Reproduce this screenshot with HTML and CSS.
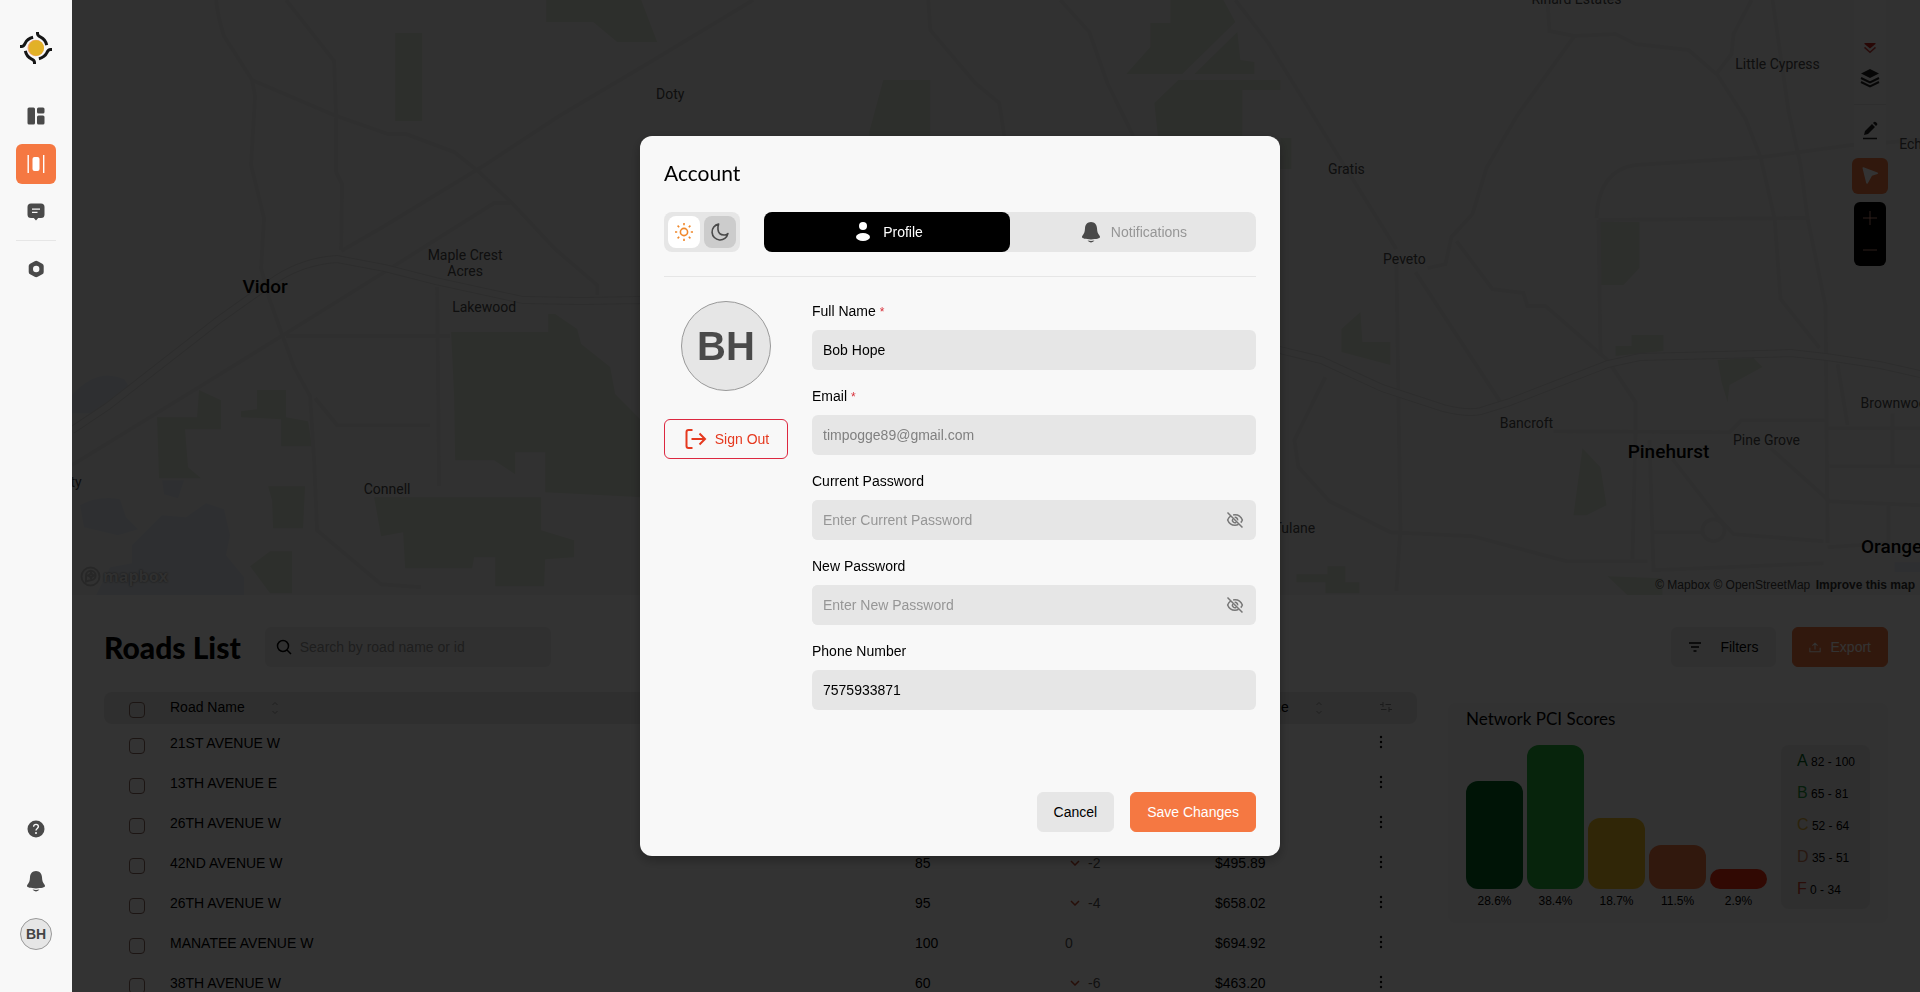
FILE: index.html
```html
<!DOCTYPE html>
<html lang="en">

<head>
  <meta charset="UTF-8" />
  <meta name="viewport" content="width=device-width, initial-scale=1.0" />
  <title>Roads - Account</title>
  <link rel="stylesheet" href="styles.css">
</head>

<body>
  <!-- Shared icons -->
  <svg class="sprite" aria-hidden="true">
    <symbol id="icon-bell" viewBox="0 0 24 24">
      <path d="M12 2c-3.700 0-5.800 2.800-6 6.200-.2 3.400-.7 5-1.900 6.500-.8 1-1.100 1.700-1.100 2.400 0 1.300 3.600 2.300 9 2.300s9-1 9-2.300c0-.7-.3-1.400-1.100-2.400-1.200-1.500-1.700-3.100-1.900-6.500C17.800 4.800 15.700 2 12 2z" />
      <path d="M8.500 20.600q3.500.6 7 0-1.200 1.800-3.500 1.800t-3.500-1.800z" />
    </symbol>
    <symbol id="icon-eye-off" viewBox="0 0 24 24">
      <g fill="none" stroke="currentColor" stroke-width="2">
        <path d="M6.500 6.500C4.500 7.800 3 9.800 2.200 12c1.600 4.200 5.400 7 9.800 7 1.700 0 3.300-.4 4.800-1.200M9.500 5.300C10.300 5.100 11.100 5 12 5c4.400 0 8.200 2.800 9.800 7-.5 1.300-1.200 2.500-2.100 3.500" />
        <path d="M9 10.500a3.500 3.500 0 0 0 4.800 4.700M11.500 8.500a3.500 3.500 0 0 1 4 4" />
        <path d="M2 2l20 20" />
      </g>
    </symbol>
    <symbol id="icon-sort" viewBox="0 0 8 14">
      <path d="M1.500 4L4 1.500 6.500 4M1.500 10L4 12.500 6.500 10" fill="none" stroke="currentColor" />
    </symbol>
    <symbol id="icon-down" viewBox="0 0 10 6">
      <path d="M1 1l4 4 4-4" fill="none" stroke="currentColor" stroke-width="1.500" />
    </symbol>
    <symbol id="icon-dots" viewBox="0 0 4 14">
      <circle cx="2" cy="2" r="1.200" />
      <circle cx="2" cy="7" r="1.200" />
      <circle cx="2" cy="12" r="1.200" />
    </symbol>
  </svg>

  <nav class="sidebar" aria-label="Main">
    <a class="logo" href="#" aria-label="Home">
      <svg width="32" height="32" viewBox="0 0 32 32">
        <circle cx="15.700" cy="16" r="8.200" fill="#f3a97b" />
        <circle cx="16.300" cy="16" r="7.700" fill="#e2b127" />
        <g fill="none" stroke="#161616" stroke-width="3">
          <path id="arc" d="M17.500 0v1.500c0 2 1.300 2.800 3.200 3.600 2.800 1.300 5 3.700 6 8" />
          <use href="#arc" transform="rotate(90 16 16)" />
          <use href="#arc" transform="rotate(180 16 16)" />
          <use href="#arc" transform="rotate(270 16 16)" />
        </g>
      </svg>
    </a>

    <div class="nav-group">
      <a class="nav-item" href="#" aria-label="Dashboard">
        <svg width="20" height="20" viewBox="0 0 20 20">
          <rect x="1.500" y="1.500" width="7.500" height="17" rx="1.500" />
          <rect x="11" y="1.500" width="7.500" height="6" rx="1.500" />
          <rect x="11" y="9.500" width="7.500" height="9" rx="1.500" />
        </svg>
      </a>
      <a class="nav-item active" href="#" aria-label="Roads">
        <svg width="20" height="20" viewBox="0 0 20 20">
          <rect x="1.500" y="1" width="1.400" height="18" />
          <rect x="17" y="1" width="1.400" height="18" />
          <rect x="6.500" y="3" width="7" height="14" rx="2" />
        </svg>
      </a>
      <a class="nav-item" href="#" aria-label="Messages">
        <svg width="20" height="20" viewBox="0 0 20 20">
          <path d="M5 1.500h10a3.500 3.500 0 0 1 3.500 3.500v7.500A3.500 3.500 0 0 1 15 16h-2.800L10 18.500 7.800 16H5a3.500 3.500 0 0 1-3.500-3.500V5A3.500 3.500 0 0 1 5 1.500z" />
          <path d="M6 7.200h8M6 10.400h5.500" stroke="#f8f8f8" stroke-width="1.300" />
        </svg>
      </a>
      <hr>
      <a class="nav-item" href="#" aria-label="Settings">
        <svg width="20" height="20" viewBox="0 0 20 20">
          <path fill-rule="evenodd" d="M8.700 2.200q1.500-.8 3 0l4.600 2.500q1.400.8 1.400 2.400v5.800q0 1.600-1.400 2.400l-4.600 2.500q-1.500.8-3 0l-4.600-2.500q-1.400-.8-1.400-2.400V7.100q0-1.600 1.400-2.400zM10.200 6.800a3.200 3.200 0 1 0 0 6.400 3.200 3.200 0 0 0 0-6.400z" />
        </svg>
      </a>
    </div>

    <div class="nav-bottom">
      <a class="nav-item" href="#" aria-label="Help">
        <svg width="20" height="20" viewBox="0 0 20 20">
          <circle cx="10" cy="10" r="8.500" />
          <path d="M7.600 7.700c0-1.400 1-2.300 2.400-2.300s2.400.9 2.400 2.200c0 1.800-2.400 1.900-2.400 4" fill="none" stroke="#f8f8f8" stroke-width="1.400" />
          <circle cx="10" cy="13.900" r="1" fill="#f8f8f8" />
        </svg>
      </a>
      <a class="nav-item" href="#" aria-label="Notifications">
        <svg width="24" height="24"><use href="#icon-bell" /></svg>
      </a>
      <button class="avatar-small" type="button">BH</button>
    </div>
  </nav>

  <main class="page">
    <section class="map" aria-label="Map">
      <svg class="map-canvas" viewBox="0 0 1848 595" preserveAspectRatio="xMinYMin slice">
        <defs>
          <path id="hw" d="M0 430l36-24 109-85 59-42q28-18 61-20l48 9 51 13 87 19 58 1 61-1 638 50 41 10 61 28 61 20q24 6 37 3l29-9 98-38 32-7 151-4 37 4 53 8 40 9" />
        </defs>
        <g class="park">
          <path d="M323 33h27v88h-27zM474 0h95l16 42h-40L521 22H474z" />
          <path d="M379 332h97v-18h7l22 15 4 15 29 23 5 27 27 27v76l-97-5v-40h-30v22l-21-14h-39l-1-63z" />
          <path d="M302 497l167 0v33l33 10v17l-29 2-1 27h-49v-29h-21l-2 11h-67l-2-36-22 4z" />
          <path d="M127 390l22 10v29h-36l3 38 13 11H87l-2-61h40z" />
          <path d="M185 390h29v27l22 4 4 25h-31v-27l-40-2v-6l16-2z" />
          <path d="M196 486h37l-2 42h-30l-1-28zM198 551h22v42h-22l-20-27z" />
          <path d="M1098 0h53l12 22-53 52h-56l24-27V23h20zM1165 32l3 28 14 2v12h-60zM1106 80h102v10h-38v60h-83l-5-47z" />
          <path d="M811 80h47v70h-61v-18z" />
          <path d="M1526 222h41v46l-16 17h-25zM1208 138h11v31h-11z" />
          <path d="M1288 312l2 30h28v23l-49-13v-23zM1559 335h32v16l-48 5v-10h16zM1645 360l36-2 9 9-33 18-2 17-6-20z" />
          <path d="M1510 448l18 19 6 38-20 10h-13zM1224 574h31v-8h18v16h14v11h-34v-11h-29zM1535 576l55 2v17h-35z" />
        </g>
        <g class="water">
          <path d="M0 395q25-28 52-16l8 12-40 22H0z" />
          <path d="M8 505q18-10 40-6l6 18 12 12-20 6-34-8zM90 480h22l-6 18-14-4z" />
          <path d="M60 545l30-30 24 2 20-14 18 6 6 26-4 20 18 22v18H24l14-28 22-4z" />
          <path d="M1822 562h26v10h-26z" />
        </g>
        <g class="road">
          <path d="M144 0q2 18 8 36l28 44 3 16-4 69 13 53-3 50 8 30 14 39 11 30 16 29 4 63 3 71 64 54 40 3" />
          <path d="M214 0l48 61 2 54v57l6 12-1 66M180 80l82 35 54 19h18l48 18 25 20 33 31 43 46 42 36v10" />
          <path d="M269 251l40-23 102-62 76-50 86-51L681 0M0 465l127-78 84-52 98-61 113-71h16" />
          <path d="M365 287l2 199M214 336h164M243 398l22 27h93" />
          <path d="M856 0l2 30 45 53 24 20 5 33M988 0l29 32 18 51 26 53M1163 0l33 43 73 118 55 88" />
          <path d="M1324 264l4 264-4 63M1343 272l85 130" />
          <path d="M1475 0l2 31 25 5 41-2 20 10 53 6 29 25 28 44 15 38 14 61 6 81 39 49" />
          <path d="M1502 36l-57 79-31 53-14 46-21 23-6 27-18 4M1384 241l36 48 31 4 4 13h18l62 54 28 42v30l-3 127" />
          <path d="M1700 0l16 111 12 54 7 53 18 88 2 237M1679 0l-18 34-2 20-16 21" />
          <path d="M1524 218q2-48 39-53l127-8 89-12 69-5M1526 220l209-2M1526 220l2 136" />
          <path d="M1253 377l-31 63 4 27 31 34 61 31 82 4 94 25h81" />
          <path d="M1481 431l176 1 12-12h84M1577 440l4 130 170-7M1600 459l45 58 16 17 90 7M1581 532h49" />
          <path d="M1698 448l59 53 91 4M1755 428h93M1757 466h91M1820 413v53M1765 364l10 61M1816 505v38l-61 4" />
          <circle cx="1641" cy="530" r="11" />
        </g>
        <use class="highway" href="#hw" />
        <use class="highway-inner" href="#hw" />
        <g class="place">
          <text x="598" y="99">Doty</text>
          <text x="393" y="260">Maple Crest</text>
          <text x="393" y="276">Acres</text>
          <text x="412" y="312">Lakewood</text>
          <text x="315" y="494">Connell</text>
          <text x="4" y="487">ty</text>
          <text x="1274" y="174">Gratis</text>
          <text x="1332" y="264">Peveto</text>
          <text x="1454" y="428">Bancroft</text>
          <text x="1694" y="445">Pine Grove</text>
          <text x="1705" y="69">Little Cypress</text>
          <text x="1504" y="4">Rinard Estates</text>
          <text x="1842" y="149">Echo</text>
          <text x="1825" y="408">Brownwood</text>
          <text x="1222" y="533">Tulane</text>
          <text class="city" x="193" y="293">Vidor</text>
          <text class="city" x="1596" y="458">Pinehurst</text>
          <text class="city" x="1819" y="553">Orange</text>
        </g>
      </svg>

      <a class="mapbox-logo" href="#">
        <svg width="21" height="21" viewBox="0 0 21 21" aria-hidden="true">
          <circle cx="10.500" cy="10.500" r="9" />
          <path d="M6 15.500V9.500a4.800 4.800 0 1 1 4.800 4.800c-1.600 0-3 .6-4.800 1.200zM11 6.500l1 2 2 1-2 1-1 2-1-2-2-1 2-1z" />
        </svg>
        mapbox
      </a>

      <div class="map-tools">
        <div class="tool-panel">
          <svg width="14" height="11" viewBox="0 0 12 10" aria-hidden="true">
            <path d="M1 0h10v1L6 5 1 1z" fill="#c8231d" />
            <path d="M1 4l5 4.500L11 4" fill="none" stroke="#c8403a" stroke-width="1.300" />
          </svg>
          <button class="tool" type="button" aria-label="Layers">
            <svg width="20" height="20" viewBox="0 0 20 20">
              <path d="M10 1l9 4.500-9 4.500-9-4.500z" />
              <path d="M1 10l9 4.500L19 10M1 14l9 4.500L19 14" fill="none" stroke="currentColor" stroke-width="2" />
            </svg>
          </button>
          <hr>
          <button class="tool" type="button" aria-label="Draw">
            <svg width="20" height="20" viewBox="0 0 20 20">
              <path d="M4 14l1-4 7-7 3 3-7 7zM13 2l1-1q1-.7 2 .2l1 1q.8 1 0 1.800l-1 1z" />
              <path d="M3 17.500h14" stroke="currentColor" stroke-width="1.500" />
            </svg>
          </button>
        </div>
        <button class="tool-select" type="button" aria-label="Select">
          <svg width="20" height="20" viewBox="0 0 20 20">
            <path d="M2.500 2q0-1 1-.7l14 5.200q1.500.7 0 1.600l-5.500 1.700-4.300 7.600q-1 1-1.500-.4z" />
          </svg>
        </button>
        <div class="zoom">
          <button type="button" aria-label="Zoom in">
            <svg width="16" height="16" viewBox="0 0 16 16"><path d="M8 1v14M1 8h14" /></svg>
          </button>
          <button type="button" aria-label="Zoom out">
            <svg width="16" height="16" viewBox="0 0 16 16"><path d="M1 8h14" /></svg>
          </button>
        </div>
      </div>

      <p class="attribution">
        <a href="#">© Mapbox</a> <a href="#">© OpenStreetMap</a> <a class="improve" href="#">Improve this map</a>
      </p>
    </section>

    <section class="roads">
      <header class="roads-header">
        <h1>Roads List</h1>
        <label class="search">
          <svg width="16" height="16" viewBox="0 0 16 16" aria-hidden="true">
            <path d="M7 1.500a5.500 5.500 0 1 0 0 11 5.500 5.500 0 0 0 0-11zM11 11l4 4" fill="none" stroke="currentColor" stroke-width="1.500" />
          </svg>
          <input type="search" placeholder="Search by road name or id" aria-label="Search roads">
        </label>
        <div class="roads-actions">
          <button class="btn btn-filters" type="button">
            <svg width="14" height="10" viewBox="0 0 14 10" aria-hidden="true">
              <path d="M1 1h12M3 5h8M5.500 9h3" stroke="currentColor" stroke-width="1.500" />
            </svg>
            Filters
          </button>
          <button class="btn btn-primary btn-export" type="button">
            <svg width="12" height="12" viewBox="0 0 14 14" aria-hidden="true">
              <path d="M1 8v4.500h12V8M7 10V2.500M4 5.500l3-3 3 3" fill="none" stroke="currentColor" stroke-width="1.200" />
            </svg>
            Export
          </button>
        </div>
      </header>

      <div class="roads-content">
        <table class="roads-table">
          <colgroup>
            <col class="col-check">
            <col>
            <col class="col-value">
            <col class="col-value">
            <col class="col-cost">
            <col class="col-menu">
          </colgroup>
          <thead>
            <tr>
              <th><input type="checkbox" aria-label="Select all roads"></th>
              <th>Road Name <svg class="sort" width="8" height="14"><use href="#icon-sort" /></svg></th>
              <th></th>
              <th></th>
              <th>Asset Value <svg class="sort" width="8" height="14"><use href="#icon-sort" /></svg></th>
              <th>
                <svg class="columns" width="14" height="12" viewBox="0 0 14 12" aria-hidden="true">
                  <path d="M4 1v5M1 3.500h3M6.500 3.500H12M10 6v5M2 8.500h5.500M10 8.500h3" fill="none" stroke="currentColor" />
                </svg>
              </th>
            </tr>
          </thead>
          <tbody id="road-rows"></tbody>
        </table>

        <aside class="scores">
          <h2>Network PCI Scores</h2>
          <div class="scores-body">
            <div class="bars">
              <div class="bar-item"><div class="bar grade-a" style="height: 108px"></div>28.6%</div>
              <div class="bar-item"><div class="bar grade-b" style="height: 144px"></div>38.4%</div>
              <div class="bar-item"><div class="bar grade-c" style="height: 71px"></div>18.7%</div>
              <div class="bar-item"><div class="bar grade-d" style="height: 44px"></div>11.5%</div>
              <div class="bar-item"><div class="bar grade-f" style="height: 20px"></div>2.9%</div>
            </div>
            <ul class="legend">
              <li><span class="letter-a">A</span> 82 - 100</li>
              <li><span class="letter-b">B</span> 65 - 81</li>
              <li><span class="letter-c">C</span> 52 - 64</li>
              <li><span class="letter-d">D</span> 35 - 51</li>
              <li><span class="letter-f">F</span> 0 - 34</li>
            </ul>
          </div>
        </aside>
      </div>
    </section>
  </main>

  <!-- Account modal -->
  <div class="overlay">
    <form class="modal" role="dialog" aria-modal="true" aria-labelledby="account-title">
      <h2 id="account-title">Account</h2>

      <div class="modal-bar">
        <div class="theme-switch">
          <button class="theme light" type="button" aria-label="Light theme">
            <svg width="20" height="20" viewBox="0 0 20 20" fill="none" stroke="currentColor" stroke-width="1.600">
              <circle cx="10" cy="10" r="3.600" />
              <path d="M10 1v2.200M10 16.800V19M1 10h2.200M16.800 10H19M3.600 3.600l1.600 1.600M14.800 14.800l1.600 1.600M3.600 16.400l1.600-1.600M14.800 5.200l1.600-1.600" />
            </svg>
          </button>
          <button class="theme dark" type="button" aria-label="Dark theme">
            <svg width="20" height="20" viewBox="0 0 20 20" fill="none" stroke="currentColor" stroke-width="1.600">
              <path d="M8.600 2.100a8 8 0 1 0 9.300 9.500c-1.200 1-2.500 1.500-3.900 1.400-3.200-.1-5.700-2.300-6-5.400-.2-2 .1-3.900.6-5.500z" stroke-linejoin="round" />
            </svg>
          </button>
        </div>
        <div class="tabs" role="tablist">
          <button class="tab selected" type="button" role="tab" aria-selected="true">
            <svg width="24" height="24" viewBox="0 0 24 24" aria-hidden="true">
              <circle cx="12" cy="6" r="4" />
              <ellipse cx="12" cy="17" rx="7" ry="4" />
            </svg>
            Profile
          </button>
          <button class="tab" type="button" role="tab" aria-selected="false">
            <svg width="24" height="24" aria-hidden="true"><use href="#icon-bell" /></svg>
            <span>Notifications</span>
          </button>
        </div>
      </div>

      <div class="modal-body">
        <div class="profile">
          <div class="avatar">BH</div>
          <button class="sign-out" type="button">
            <svg width="24" height="24" viewBox="0 0 24 24" fill="none" stroke="currentColor" stroke-width="2" aria-hidden="true">
              <path d="M9.500 3H5.500Q3.500 3 3.500 5v14q0 2 2 2h4M8.500 12h13M16.500 6.500L22 12l-5.500 5.500" />
            </svg>
            Sign Out
          </button>
        </div>

        <div class="fields">
          <div class="field">
            <label for="full-name">Full Name <span class="required">*</span></label>
            <input id="full-name" type="text" value="Bob Hope">
          </div>
          <div class="field">
            <label for="email">Email <span class="required">*</span></label>
            <input id="email" type="email" value="timpogge89@gmail.com" disabled>
          </div>
          <div class="field">
            <label for="current-password">Current Password</label>
            <div class="password">
              <input id="current-password" type="password" placeholder="Enter Current Password">
              <button type="button" aria-label="Show password"><svg width="18" height="18"><use href="#icon-eye-off" /></svg></button>
            </div>
          </div>
          <div class="field">
            <label for="new-password">New Password</label>
            <div class="password">
              <input id="new-password" type="password" placeholder="Enter New Password">
              <button type="button" aria-label="Show password"><svg width="18" height="18"><use href="#icon-eye-off" /></svg></button>
            </div>
          </div>
          <div class="field">
            <label for="phone">Phone Number</label>
            <input id="phone" type="tel" value="7575933871">
          </div>
        </div>
      </div>

      <div class="modal-footer">
        <button class="btn" type="button">Cancel</button>
        <button class="btn btn-primary" type="submit">Save Changes</button>
      </div>
    </form>
  </div>

  <script>
    const roads = [
      { name: '21ST AVENUE W' },
      { name: '13TH AVENUE E' },
      { name: '26TH AVENUE W' },
      { name: '42ND AVENUE W', pci: 85, change: -2, value: '$495.89' },
      { name: '26TH AVENUE W', pci: 95, change: -4, value: '$658.02' },
      { name: 'MANATEE AVENUE W', pci: 100, change: 0, value: '$694.92' },
      { name: '38TH AVENUE W', pci: 60, change: -6, value: '$463.20' },
    ];

    document.getElementById('road-rows').innerHTML = roads.map(({ name, pci = '', change = '', value = '' }) => `
      <tr>
        <td><input type="checkbox" aria-label="Select ${name}"></td>
        <td>${name}</td>
        <td>${pci}</td>
        <td class="change">${change ? `<span class="drop"><svg width="10" height="6"><use href="#icon-down" /></svg>${change}</span>` : change}</td>
        <td>${value}</td>
        <td><button class="row-menu" type="button" aria-label="Row menu"><svg width="4" height="14"><use href="#icon-dots" /></svg></button></td>
      </tr>`).join('');
  </script>
</body>

</html>
```

FILE: styles.css
```css
* {
  box-sizing: border-box;
}

body {
  display: flex;
  height: 100vh;
  margin: 0;
  overflow: hidden;
  background: #fff;
  color: #000;
  font-family: "Liberation Sans", Helvetica, Arial, sans-serif;
  font-size: 14px;
  line-height: 21px;
}

button,
input {
  font: inherit;
  color: inherit;
}

button {
  padding: 0;
  border: none;
  background: none;
  cursor: pointer;
}

a {
  color: inherit;
  text-decoration: none;
}

h1,
h2,
p,
ul {
  margin: 0;
  padding: 0;
  font-weight: normal;
}

hr {
  width: 100%;
  height: 1px;
  margin: 0;
  border: none;
  background: #e6e6e6;
}

svg {
  display: block;
  flex-shrink: 0;
  fill: currentColor;
}

svg[fill="none"] {
  fill: none;
}

.sprite {
  position: absolute;
  width: 0;
  height: 0;
}

/* Sidebar */
.sidebar {
  position: relative;
  z-index: 20;
  display: flex;
  flex-direction: column;
  flex-shrink: 0;
  width: 72px;
  padding: 32px 16px 42px;
  background: #f8f8f8;
  color: #4a4a4a;
}

.logo {
  align-self: center;
  margin-bottom: 32px;
}

.nav-group {
  display: flex;
  flex-direction: column;
  gap: 8px;
}

.nav-item {
  display: flex;
  align-items: center;
  justify-content: center;
  height: 40px;
  border-radius: 6px;
}

.nav-item.active {
  background: #f57842;
  color: #fff;
}

.nav-bottom {
  display: flex;
  flex-direction: column;
  gap: 12px;
  margin-top: auto;
}

.avatar-small {
  align-self: center;
  width: 32px;
  height: 32px;
  margin-top: 5px;
  border: 1px solid #999;
  border-radius: 50%;
  background: #e6e6e6;
  color: #444;
  font-weight: bold;
}

/* Page */
.page {
  flex: 1;
  min-width: 0;
}

.map {
  position: relative;
  height: 60vh;
  overflow: hidden;
  background: #f5f5f4;
}

.map-canvas {
  width: 100%;
  height: 100%;
}

.park {
  fill: #e1e8dc;
}

.water {
  fill: #e6ebf3;
}

.road {
  fill: none;
  stroke: #ebebeb;
  stroke-width: 4;
}

.highway {
  fill: none;
  stroke: #dedede;
  stroke-width: 8;
}

.highway-inner {
  fill: none;
  stroke: #f4f4f4;
  stroke-width: 6;
}

.place {
  fill: #4a4a4a;
  font-family: Roboto, sans-serif;
  font-size: 14px;
  text-anchor: middle;
}

.city {
  fill: #000;
  font-size: 19px;
  font-weight: 500;
}

.mapbox-logo {
  position: absolute;
  bottom: 8px;
  left: 8px;
  display: flex;
  align-items: center;
  gap: 2px;
  color: #f0f0f0;
  font-family: "Open Sans", sans-serif;
  font-size: 16px;
  font-weight: bold;
  text-shadow: 0 0 2px #555;
}

.mapbox-logo svg {
  fill: none;
  stroke: #c4c4c4;
  stroke-width: 2;
}

.map-tools {
  position: absolute;
  top: 0;
  right: 32px;
  display: flex;
  flex-direction: column;
  align-items: center;
  gap: 8px;
}

.tool-panel {
  display: flex;
  flex-direction: column;
  align-items: center;
  width: 32px;
  height: 150px;
  padding-top: 43px;
  background: #f8f8f8;
  color: #222;
}

.tool-panel hr {
  margin: 10px 0;
}

.tool {
  padding: 6px;
}

.tool-panel svg + .tool {
  margin-top: 8px;
}

.tool-select {
  display: grid;
  place-items: center;
  width: 36px;
  height: 36px;
  border-radius: 6px;
  background: #f57842;
  color: #fff;
}

.zoom {
  display: flex;
  flex-direction: column;
  width: 32px;
  border-radius: 6px;
  background: #000;
}

.zoom button {
  display: grid;
  place-items: center;
  height: 32px;
}

.zoom svg {
  stroke: #e09a84;
}

.attribution {
  position: absolute;
  right: 5px;
  bottom: 0;
  color: #404040;
  font-size: 12px;
  line-height: 19px;
}

.improve {
  margin-left: 2px;
  color: #333;
  font-weight: bold;
}

.roads {
  padding: 32px 32px 0;
}

.roads-header {
  display: flex;
  align-items: center;
  margin-bottom: 25px;
}

.roads-header h1 {
  margin-right: 24px;
  font-family: Lato, sans-serif;
  font-size: 30px;
  font-weight: 900;
}

.search {
  display: flex;
  align-items: center;
  gap: 8px;
  width: 286px;
  height: 40px;
  padding: 0 11px;
  border-radius: 6px;
  background: #f0f0f0;
}

.search input {
  flex: 1;
  min-width: 0;
  padding: 0;
  border: none;
  background: none;
}

::placeholder {
  color: #969696;
  opacity: 1;
}

.roads-actions {
  display: flex;
  gap: 16px;
  margin-left: auto;
}

.btn {
  display: flex;
  align-items: center;
  justify-content: center;
  gap: 8px;
  height: 40px;
  padding: 0 16px;
  border: 1px solid #e6e6e6;
  border-radius: 6px;
  background: #e6e6e6;
}

.btn-filters {
  gap: 18px;
  border-color: #f0f0f0;
  background: #f0f0f0;
}

.btn-export {
  gap: 10px;
}

.btn-primary {
  border-color: #f57842;
  background: #f57842;
  color: #fff;
}

.roads-content {
  display: grid;
  grid-template-columns: 1fr 440px;
  align-items: start;
  gap: 31px;
}

.roads-table {
  width: 100%;
  table-layout: fixed;
  border-spacing: 0;
}

.col-check {
  width: 66px;
}

.col-value {
  width: 150px;
}

.col-cost {
  width: 160px;
}

.col-menu {
  width: 42px;
}

.roads-table th,
.roads-table td {
  height: 40px;
  padding: 0 0 2px;
  text-align: left;
  font-weight: normal;
}

.roads-table th {
  height: 32px;
  background: #ebebeb;
}

.roads-table th:first-child {
  border-radius: 8px 0 0 8px;
}

.roads-table th:last-child {
  padding-left: 4px;
  border-radius: 0 8px 8px 0;
}

.roads-table input {
  display: block;
  width: 16px;
  height: 16px;
  margin: 5px 0 0 25px;
  appearance: none;
  border: 1px solid #8c6a5e;
  border-radius: 4px;
}

.sort {
  display: inline-block;
  margin-left: 22px;
  color: #999;
  vertical-align: middle;
}

.columns {
  color: #888;
}

.change {
  color: #555;
}

.drop {
  display: flex;
  align-items: center;
  gap: 8px;
  padding-left: 5px;
}

.drop svg {
  color: #c04a30;
}

.row-menu {
  padding: 4px;
}

.scores {
  margin-top: 11px;
  padding: 4px 18px 14px;
  border-radius: 8px;
  background: #f8f8f8;
}

.scores h2 {
  margin-bottom: 14px;
  font-family: Lato, sans-serif;
  font-size: 17px;
  line-height: 24px;
}

.scores-body {
  display: flex;
  gap: 14px;
  font-size: 12px;
  line-height: 16px;
}

.bars {
  display: flex;
  flex: 1;
  align-items: flex-end;
  gap: 4px;
}

.bar-item {
  flex: 1;
  text-align: center;
}

.bar {
  margin-bottom: 4px;
  border-radius: 12px;
}

.grade-a {
  background: #006622;
}

.grade-b {
  background: #23b43c;
}

.grade-c {
  background: #f0be23;
}

.grade-d {
  background: #f57842;
}

.grade-f {
  background: #f52d0f;
}

.legend {
  width: 89px;
  padding-left: 16px;
  border-radius: 8px;
  background: #ebebeb;
  list-style: none;
}

.legend li {
  height: 32px;
  line-height: 32px;
}

.legend span {
  font-size: 16px;
}

.letter-a {
  color: #006622;
}

.letter-b {
  color: #23963c;
}

.letter-c {
  color: #d8ac3c;
}

.letter-d {
  color: #c87a58;
}

.letter-f {
  color: #d2412d;
}

/* Modal */
.overlay {
  position: fixed;
  inset: 0;
  z-index: 10;
  display: flex;
  align-items: center;
  justify-content: center;
  background: rgba(0, 0, 0, 0.8);
}

.modal {
  display: flex;
  flex-direction: column;
  width: 640px;
  min-height: 720px;
  padding: 24px;
  border-radius: 12px;
  background: #f8f8f8;
  box-shadow: 0 4px 12px rgba(0, 0, 0, 0.3);
}

.modal h2 {
  margin-bottom: 27px;
  font-family: Lato, sans-serif;
  font-size: 21px;
  line-height: 25px;
}

.modal-bar {
  display: flex;
  gap: 24px;
  padding-bottom: 24px;
  border-bottom: 1px solid #e6e6e6;
}

.theme-switch {
  display: flex;
  gap: 4px;
  padding: 4px;
  border-radius: 8px;
  background: #e6e6e6;
}

.theme {
  display: grid;
  place-items: center;
  width: 32px;
  height: 32px;
  border-radius: 8px;
}

.light {
  background: #fff;
  color: #f0882b;
}

.dark {
  background: #cccccc;
  color: #4a4a4a;
}

.tabs {
  display: flex;
  flex: 1;
  border-radius: 8px;
  background: #e6e6e6;
}

.tab {
  display: flex;
  flex: 1;
  align-items: center;
  justify-content: center;
  gap: 8px;
  height: 40px;
  border-radius: 8px;
  color: #4a4a4a;
}

.tab span {
  color: #969696;
}

.tab.selected {
  background: #000;
  color: #fff;
}

.modal-body {
  display: flex;
  gap: 24px;
  padding-top: 24px;
}

.profile {
  display: flex;
  flex-direction: column;
  align-items: center;
  gap: 28px;
  width: 124px;
}

.avatar {
  display: grid;
  place-items: center;
  width: 90px;
  height: 90px;
  border: 1px solid #999;
  border-radius: 50%;
  background: #e6e6e6;
  color: #4a4a4a;
  font-size: 40px;
  font-weight: bold;
}

.sign-out {
  display: flex;
  align-items: center;
  justify-content: center;
  gap: 8px;
  width: 100%;
  height: 40px;
  border: 1px solid #dc2840;
  border-radius: 6px;
  color: #e5391f;
}

.fields {
  display: flex;
  flex: 1;
  flex-direction: column;
  gap: 16px;
}

.field label {
  display: block;
  margin-bottom: 8px;
}

.required {
  color: #d8303a;
  font-size: 12px;
  line-height: 12px;
}

.field input {
  display: block;
  width: 100%;
  height: 40px;
  padding: 0 11px;
  border: none;
  border-radius: 6px;
  background: #e6e6e6;
}

.field input:disabled {
  color: #808080;
}

.password {
  display: flex;
  align-items: center;
  padding-right: 12px;
  border-radius: 6px;
  background: #e6e6e6;
}

.password button {
  color: #777;
}

.modal-footer {
  display: flex;
  justify-content: flex-end;
  gap: 16px;
  margin-top: auto;
}
```
